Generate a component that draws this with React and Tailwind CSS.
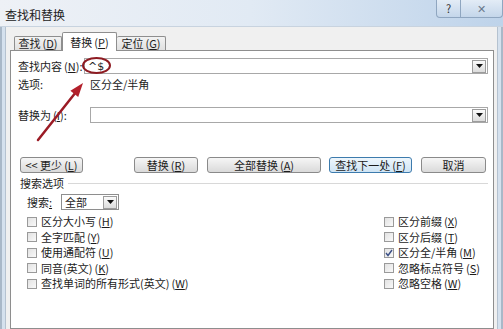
import React from 'react';

const leftOpts = [
  ['区分大小写', 'H', false],
  ['全字匹配', 'Y', false],
  ['使用通配符', 'U', false],
  ['同音(英文)', 'K', false],
  ['查找单词的所有形式(英文)', 'W', false],
];

const rightOpts = [
  ['区分前缀', 'X', false],
  ['区分后缀', 'T', false],
  ['区分全/半角', 'M', true],
  ['忽略标点符号', 'S', false],
  ['忽略空格', 'W', false],
];

const Key = ({ k }) => (
  <span className="ml-[2px]">
    (<span className="underline">{k}</span>)
  </span>
);

const DropBtn = () => (
  <div className="w-[14px] h-[13px] border border-[#9c9c9c] bg-gradient-to-b from-[#fbfbfb] to-[#dcdcdc] flex items-center justify-center">
    <svg width="7" height="4" viewBox="0 0 7 4">
      <path d="M0 0 H7 L3.5 4 Z" fill="#111" />
    </svg>
  </div>
);

const Btn = ({ children, className = '', primary }) => (
  <div
    className={`h-[16px] flex items-center justify-center rounded-[3px] border ${
      primary
        ? 'border-[#3d7bad] bg-gradient-to-b from-[#eef6fc] to-[#cfe4f4]'
        : 'border-[#8a8a8a] bg-gradient-to-b from-[#f6f6f6] to-[#dadada]'
    } ${className}`}
  >
    {children}
  </div>
);

const Check = ({ checked }) => (
  <div className="w-[10px] h-[10px] border border-[#9a9a9a] bg-gradient-to-br from-[#e2e2e2] to-[#f9f9f9] flex items-center justify-center">
    {checked && (
      <svg width="8" height="8" viewBox="0 0 8 8">
        <path d="M1 4 L3 6.5 L7 1" fill="none" stroke="#3b4f86" strokeWidth="1.4" />
      </svg>
    )}
  </div>
);

const OptRow = ({ label, k, checked }) => (
  <div className="h-[15.5px] flex items-center">
    <Check checked={checked} />
    <span className="ml-[4px] whitespace-nowrap">
      {label}
      <Key k={k} />
    </span>
  </div>
);

export default function App() {
  return (
    <div className="relative w-[503px] h-[329px] overflow-hidden bg-[#d5e1ee] text-[11px] leading-none text-[#1c1c1c] font-['Noto_Sans_CJK_SC',sans-serif]">
      {/* Title bar */}
      <div className="h-[27px] flex items-start bg-gradient-to-r from-[#eef1f6] via-[#e1eaf4] to-[#bed3ea] border-b border-[#c8d3df]">
        <div className="pl-[5px] pt-[9px] text-[12px] text-[#222]">查找和替换</div>
        <div className="ml-auto flex">
          <div className="w-[25px] h-[18px] border border-t-0 border-[#8fa6c0] rounded-bl-[4px] bg-gradient-to-b from-[#e3ecf6] to-[#c4d6ea] flex items-center justify-center text-[11px] text-[#333]">
            ?
          </div>
          <div className="w-[42px] h-[18px] border border-t-0 border-l-0 border-[#8fa6c0] rounded-br-[4px] bg-gradient-to-b from-[#e3ecf6] to-[#c4d6ea] flex items-center justify-center text-[11px] text-[#6a7a8c]">
            ✕
          </div>
        </div>
      </div>

      {/* Body */}
      <div className="flex h-[302px]">
        <div className="w-[6px] border-l-2 border-r border-l-[#a9b8c8] border-r-[#b5c2d0]" />
        <div className="flex-1 bg-[#f0f0f0] pl-[4px] pr-[3px] pt-[5px] flex flex-col">
          {/* Tabs */}
          <div className="h-[18px] flex items-end pl-[4px] relative z-10">
            <div className="w-[48px] h-[14px] border border-b-0 border-[#8e8e8e] bg-gradient-to-b from-[#f3f3f3] to-[#e0e0e0] flex items-center justify-center rounded-t-[2px]">
              查找<Key k="D" />
            </div>
            <div className="w-[55px] h-[19px] -mb-px border border-b-0 border-[#8e8e8e] bg-white flex items-center justify-center rounded-t-[2px]">
              替换<Key k="P" />
            </div>
            <div className="w-[49px] h-[14px] border border-b-0 border-l-0 border-[#8e8e8e] bg-gradient-to-b from-[#f3f3f3] to-[#e0e0e0] flex items-center justify-center rounded-t-[2px]">
              定位<Key k="G" />
            </div>
          </div>

          {/* Panel */}
          <div className="flex-1 bg-white border border-[#8e8e8e] flex flex-col">
            <div className="mt-[7px] h-[16px] flex items-center">
              <span className="ml-[7px] w-[66px] whitespace-nowrap">
                查找内容<Key k="N" />:
              </span>
              <div className="flex-1 mr-[5px] h-[16px] border border-[#a8a8a8] flex items-center pl-[3px] pr-[1px]">
                <span className="font-['DejaVu_Sans',sans-serif] text-[11px]">^$</span>
                <div className="ml-auto"><DropBtn /></div>
              </div>
            </div>

            <div className="mt-[2px] h-[16px] flex items-center">
              <span className="ml-[7px] w-[72px]">选项:</span>
              <span>区分全/半角</span>
            </div>

            <div className="mt-[15px] h-[16px] flex items-center">
              <span className="ml-[7px] w-[72px] whitespace-nowrap">
                替换为<Key k="I" />:
              </span>
              <div className="flex-1 mr-[5px] h-[16px] border border-[#a8a8a8] flex items-center pr-[1px]">
                <div className="ml-auto"><DropBtn /></div>
              </div>
            </div>

            <div className="mt-[34px] flex items-center">
              <Btn className="ml-[9px] w-[63px]">
                &lt;&lt; 更少<Key k="L" />
              </Btn>
              <Btn className="ml-[51px] w-[64px]">
                替换<Key k="R" />
              </Btn>
              <Btn className="ml-[9px] w-[114px]">
                全部替换<Key k="A" />
              </Btn>
              <Btn primary className="ml-[8px] w-[83px]">
                查找下一处<Key k="F" />
              </Btn>
              <Btn className="ml-[9px] w-[65px]">取消</Btn>
            </div>

            <div className="mt-[3px] h-[14px] flex items-center">
              <span className="ml-[9px]">搜索选项</span>
              <div className="flex-1 ml-[4px] mr-[5px] border-t border-[#d8d8d8]" />
            </div>

            <div className="mt-[4px] h-[16px] flex items-center">
              <span className="ml-[16px] w-[34px] whitespace-nowrap">
                搜索<span className="underline">:</span>
              </span>
              <div className="w-[58px] h-[16px] border border-[#8e8e8e] flex items-center pl-[3px] pr-[1px]">
                <span>全部</span>
                <div className="ml-auto"><DropBtn /></div>
              </div>
            </div>

            <div className="mt-[4px] flex">
              <div className="ml-[16px] w-[357px] flex flex-col">
                {leftOpts.map(([l, k, c]) => (
                  <OptRow key={l} label={l} k={k} checked={c} />
                ))}
              </div>
              <div className="flex flex-col">
                {rightOpts.map(([l, k, c]) => (
                  <OptRow key={l} label={l} k={k} checked={c} />
                ))}
              </div>
            </div>
          </div>
        </div>
        <div className="w-[6px] border-l border-r-2 border-l-[#b5c2d0] border-r-[#a9b8c8]" />
      </div>

      {/* Red annotation */}
      <svg className="absolute inset-0 pointer-events-none" width="503" height="329" viewBox="0 0 503 329">
        <ellipse cx="96.5" cy="65.5" rx="13.5" ry="7.5" fill="none" stroke="#8e1b22" strokeWidth="2" />
        <line x1="38" y1="140" x2="76" y2="92" stroke="#9b1b25" strokeWidth="2.5" strokeLinecap="round" />
        <path d="M83 83 L70.4 90.8 L78.2 97 Z" fill="#b3202b" />
      </svg>
    </div>
  );
}
